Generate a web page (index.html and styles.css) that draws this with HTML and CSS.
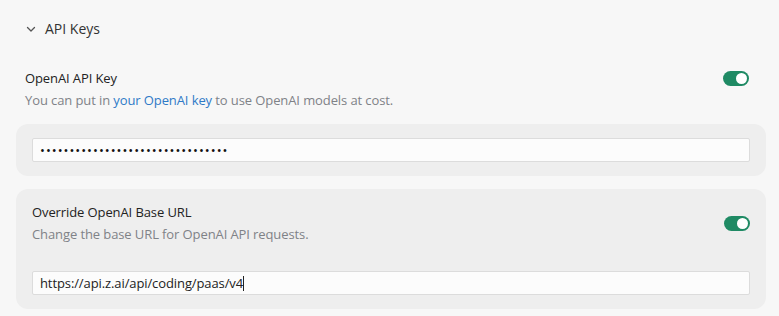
FILE: index.html
```html
<!DOCTYPE html>
<html lang="en">
<head>
    <meta charset="UTF-8">
    <meta name="viewport" content="width=device-width, initial-scale=1.0">
    <title>Settings - API Keys</title>
    <link rel="stylesheet" href="styles.css">
</head>
<body>
    <!-- Section heading -->
    <div class="heading">
        <svg class="chevron" width="10" height="10" viewBox="0 0 10 10">
            <path d="M1.5 3.5 L5 7 L8.5 3.5" fill="none" stroke="#555" stroke-width="1.3" stroke-linecap="round" stroke-linejoin="round"/>
        </svg>
        <span>API Keys</span>
    </div>

    <!-- OpenAI API Key -->
    <div class="setting">
        <div class="info">
            <div class="name">OpenAI API Key</div>
            <div class="desc">You can put in <a href="#">your OpenAI key</a> to use OpenAI models at cost.</div>
        </div>
        <div class="toggle top"><div class="knob"></div></div>
    </div>
    <div class="card">
        <input class="field secret" type="password" value="sk-0123456789abcdefghijklmnopqrs">
    </div>

    <!-- Base URL override -->
    <div class="card tall">
        <div class="setting inner">
            <div class="info">
                <div class="name">Override OpenAI Base URL</div>
                <div class="desc">Change the base URL for OpenAI API requests.</div>
            </div>
            <div class="toggle"><div class="knob"></div></div>
        </div>
        <div class="field url">https://api.z.ai/api/coding/paas/v4<span class="caret"></span></div>
    </div>
</body>
</html>
```

FILE: styles.css
```css
body {
    margin: 0;
    padding: 0 13px 0 16px;
    background-color: #f7f7f7;
    font-family: 'Open Sans', sans-serif;
    font-size: 13px;
    color: #222;
}

.heading {
    display: flex;
    align-items: center;
    height: 57px;
    padding-left: 10px;
    font-size: 14px;
    color: #333;
}

.chevron {
    margin-right: 9px;
}

.setting {
    display: flex;
    align-items: center;
    justify-content: space-between;
    padding: 10px 17px 13px 9px;
}

.name {
    line-height: 22px;
    letter-spacing: -0.1px;
}

.desc {
    color: #7f8287;
    line-height: 22px;
    letter-spacing: -0.1px;
}

.desc a {
    color: #2f7ac7;
    text-decoration: none;
}

.toggle {
    width: 26px;
    height: 15px;
    border-radius: 8px;
    background-color: #1f8a64;
    position: relative;
}

.toggle.top {
    margin-top: -22px;
}

.knob {
    position: absolute;
    right: 2px;
    top: 2px;
    width: 11px;
    height: 11px;
    border-radius: 50%;
    background-color: #fff;
}

.card {
    background-color: #eeeeee;
    border-radius: 12px;
    padding: 14px 16px;
    margin-bottom: 13px;
}

.card.tall {
    padding-top: 12px;
}

.card .setting.inner {
    padding: 0 0 26px 0;
}

.field {
    display: block;
    box-sizing: border-box;
    width: 100%;
    height: 24px;
    border: 1px solid #dcdcdc;
    border-radius: 2px;
    background-color: #fcfcfc;
    padding: 0 7px;
    font-family: 'Open Sans', sans-serif;
    font-size: 13px;
    color: #111;
    outline: none;
}

.secret {
    letter-spacing: 1px;
}

.url {
    line-height: 22px;
    letter-spacing: -0.1px;
    color: #222;
}

.caret {
    display: inline-block;
    width: 1px;
    height: 15px;
    background-color: #222;
    vertical-align: -3px;
}
```
